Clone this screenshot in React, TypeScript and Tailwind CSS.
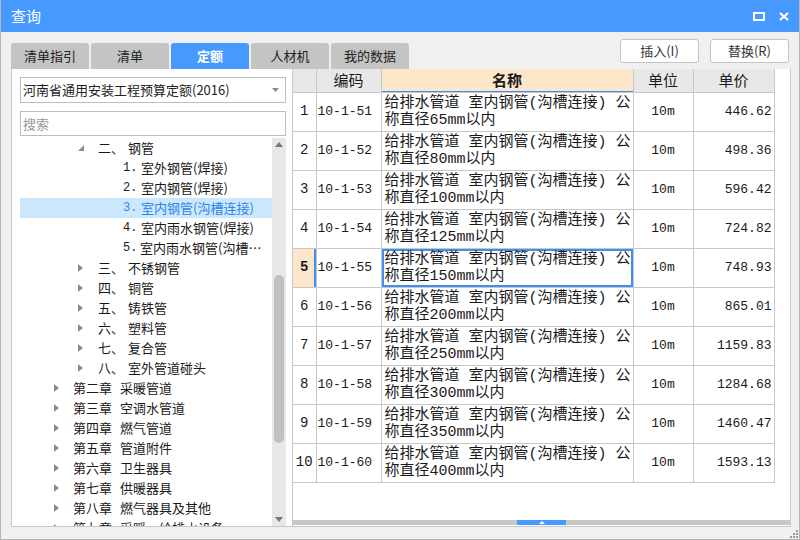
import React from 'react';

type TreeNode = {
  level: 'ch' | 'sec' | 'item';
  label: string;
  text: string;
  open?: boolean;
  selected?: boolean;
};

const tree: TreeNode[] = [
  { level: 'sec', label: '二、', text: '钢管', open: true },
  { level: 'item', label: '1.', text: '室外钢管(焊接)' },
  { level: 'item', label: '2.', text: '室内钢管(焊接)' },
  { level: 'item', label: '3.', text: '室内钢管(沟槽连接)', selected: true },
  { level: 'item', label: '4.', text: '室内雨水钢管(焊接)' },
  { level: 'item', label: '5.', text: '室内雨水钢管(沟槽连接)' },
  { level: 'sec', label: '三、', text: '不锈钢管' },
  { level: 'sec', label: '四、', text: '铜管' },
  { level: 'sec', label: '五、', text: '铸铁管' },
  { level: 'sec', label: '六、', text: '塑料管' },
  { level: 'sec', label: '七、', text: '复合管' },
  { level: 'sec', label: '八、', text: '室外管道碰头' },
  { level: 'ch', label: '第二章', text: '采暖管道' },
  { level: 'ch', label: '第三章', text: '空调水管道' },
  { level: 'ch', label: '第四章', text: '燃气管道' },
  { level: 'ch', label: '第五章', text: '管道附件' },
  { level: 'ch', label: '第六章', text: '卫生器具' },
  { level: 'ch', label: '第七章', text: '供暖器具' },
  { level: 'ch', label: '第八章', text: '燃气器具及其他' },
  { level: 'ch', label: '第九章', text: '采暖、给排水设备' },
];

const rows = [
  { code: '10-1-51', dia: '65', price: '446.62' },
  { code: '10-1-52', dia: '80', price: '498.36' },
  { code: '10-1-53', dia: '100', price: '596.42' },
  { code: '10-1-54', dia: '125', price: '724.82' },
  { code: '10-1-55', dia: '150', price: '748.93' },
  { code: '10-1-56', dia: '200', price: '865.01' },
  { code: '10-1-57', dia: '250', price: '1159.83' },
  { code: '10-1-58', dia: '300', price: '1284.68' },
  { code: '10-1-59', dia: '350', price: '1460.47' },
  { code: '10-1-60', dia: '400', price: '1593.13' },
];

const tabs = ['清单指引', '清单', '定额', '人材机', '我的数据'];

function Arrow({ open }: { open?: boolean }) {
  return open ? (
    <svg width="6" height="6" viewBox="0 0 6 6">
      <path d="M6 0 L6 6 L0 6 Z" fill="#8c8c8c" />
    </svg>
  ) : (
    <svg width="5" height="8" viewBox="0 0 5 8">
      <path d="M0 0 L5 4 L0 8 Z" fill="#8c8c8c" />
    </svg>
  );
}

function TreeRow({ node }: { node: TreeNode }) {
  const base = `h-[20px] flex items-center whitespace-nowrap text-[13px] ${
    node.selected ? 'bg-[#cce8ff] text-[#2f86e6]' : 'text-[#1a1a1a]'
  }`;
  if (node.level === 'ch') {
    return (
      <div className={`${base} pl-[34px]`}>
        <span className="w-[19px] flex items-center">
          <Arrow />
        </span>
        <span>{node.label}</span>
        <span className="ml-[8px]">{node.text}</span>
      </div>
    );
  }
  if (node.level === 'sec') {
    return (
      <div className={`${base} pl-[58px]`}>
        <span className="w-[20px] flex items-center">
          <Arrow open={node.open} />
        </span>
        <span className="w-[30px]">{node.label}</span>
        <span>{node.text}</span>
      </div>
    );
  }
  return (
    <div className={`${base} pl-[103px]`}>
      <span className="w-[18px] text-[12px] font-['Liberation_Mono',monospace]">{node.label}</span>
      <span className="truncate">{node.text}</span>
    </div>
  );
}

export default function App() {
  return (
    <div className="w-[800px] h-[540px] overflow-hidden bg-[#f0f0f0] border-x border-b border-[#b4b4b4] flex flex-col font-['Noto_Sans_CJK_SC',sans-serif] text-[#222]">
      {/* title bar */}
      <div className="h-[32px] shrink-0 bg-[#4599ff] flex items-center justify-between pl-[10px] pr-[10px]">
        <span className="text-white text-[15px]">查询</span>
        <div className="flex items-center gap-[14px]">
          <svg width="12" height="9" viewBox="0 0 12 9">
            <rect x="1" y="1" width="10" height="7" fill="none" stroke="#fff" strokeWidth="2" />
          </svg>
          <svg width="10" height="9" viewBox="0 0 10 9">
            <path d="M1 1 L9 8 M9 1 L1 8" stroke="#fff" strokeWidth="2.2" />
          </svg>
        </div>
      </div>

      {/* tabs + buttons */}
      <div className="h-[37px] shrink-0 flex justify-between pl-[10px] pr-[10px]">
        <div className="flex gap-[2px] mt-[11px] h-[26px]">
          {tabs.map((t) => (
            <div
              key={t}
              className={`w-[78px] h-[26px] rounded-t-[3px] flex items-center justify-center text-[13px] ${
                t === '定额' ? 'bg-[#4599ff] text-white font-bold' : 'bg-[#c4c4c4] text-[#222]'
              }`}
            >
              {t}
            </div>
          ))}
        </div>
        <div className="flex gap-[11px] mt-[7px] h-[24px]">
          {['插入(I)', '替换(R)'].map((b) => (
            <div
              key={b}
              className="w-[79px] h-[24px] bg-white border border-[#c4c4c4] rounded-[3px] flex items-center justify-center text-[13px] text-[#333]"
            >
              {b}
            </div>
          ))}
        </div>
      </div>

      {/* content */}
      <div className="ml-[10px] w-[780px] h-[458px] shrink-0 bg-white border-x border-b border-[#c8c8c8] flex">
        {/* left side */}
        <div className="w-[281px] h-full pl-[8px] pr-[6px] pt-[8px] flex flex-col border-r border-[#c8c8c8]">
          <div className="h-[26px] border border-[#bdbdbd] flex items-center justify-between pl-[2px] pr-[6px] text-[13px] whitespace-nowrap">
            <span>河南省通用安装工程预算定额(2016)</span>
            <svg width="7" height="4" viewBox="0 0 7 4">
              <path d="M0 0 L7 0 L3.5 4 Z" fill="#8c8c8c" />
            </svg>
          </div>
          <div className="h-[25px] mt-[8px] border border-[#bdbdbd] flex items-center pl-[2px] text-[13px] text-[#9a9a9a]">
            搜索
          </div>
          <div className="mt-[2px] flex-1 flex overflow-hidden">
            <div className="flex-1 overflow-hidden">
              {tree.map((n, i) => (
                <TreeRow key={i} node={n} />
              ))}
            </div>
            <div className="w-[14px] bg-[#e8e8e8] flex flex-col items-center">
              <svg className="mt-[4px]" width="8" height="5" viewBox="0 0 8 5">
                <path d="M4 0 L8 5 L0 5 Z" fill="#777" />
              </svg>
              <div className="mt-[128px] w-[10px] h-[168px] rounded-full bg-[#c1c1c1]" />
              <div className="flex-1" />
              <svg className="mb-[4px]" width="8" height="5" viewBox="0 0 8 5">
                <path d="M0 0 L8 0 L4 5 Z" fill="#777" />
              </svg>
            </div>
          </div>
        </div>

        {/* right side */}
        <div className="flex-1 h-full flex flex-col">
          <div className="flex-1">
            <table className="table-fixed border-collapse text-[#1a1a1a]">
              <colgroup>
                <col className="w-[23px]" />
                <col className="w-[65px]" />
                <col className="w-[252px]" />
                <col className="w-[60px]" />
                <col className="w-[81px]" />
              </colgroup>
              <thead>
                <tr className="h-[23px] text-[15px]">
                  <th className="border border-t-0 border-l-0 border-[#c8c8c8] bg-[#e8e8e8] font-normal"></th>
                  <th className="border border-t-0 border-[#c8c8c8] bg-[#e8e8e8] font-normal">编码</th>
                  <th className="border border-t-0 border-[#c8c8c8] bg-[#fde6c9] font-bold shadow-[inset_0_-1px_0_#3f8ff0]">名称</th>
                  <th className="border border-t-0 border-[#c8c8c8] bg-[#e8e8e8] font-normal">单位</th>
                  <th className="border border-t-0 border-[#c8c8c8] bg-[#e8e8e8] font-normal">单价</th>
                </tr>
              </thead>
              <tbody>
                {rows.map((r, i) => {
                  const sel = i === 4;
                  return (
                    <tr key={r.code} className="h-[39px]">
                      <td
                        className={`border border-l-0 border-[#c8c8c8] text-center text-[14px] font-['Liberation_Mono',monospace] ${
                          sel ? 'bg-[#fde6c9] font-bold shadow-[inset_-2px_0_0_#3f8ff0]' : ''
                        }`}
                      >
                        {i + 1}
                      </td>
                      <td className="border border-[#c8c8c8] pl-[1px] text-[13px] font-['Liberation_Mono',monospace] whitespace-nowrap">
                        {r.code}
                      </td>
                      <td
                        className={`border border-[#c8c8c8] pl-[3px] text-[15px] leading-[17px] font-['Liberation_Mono','Noto_Sans_CJK_SC',monospace] whitespace-nowrap overflow-hidden ${
                          sel ? 'shadow-[inset_0_0_0_2px_#3f8ff0]' : ''
                        }`}
                      >
                        <div>给排水管道 室内钢管(沟槽连接) 公</div>
                        <div>称直径{r.dia}mm以内</div>
                      </td>
                      <td className="border border-[#c8c8c8] text-center text-[13px] font-['Liberation_Mono',monospace]">
                        10m
                      </td>
                      <td className="border border-[#c8c8c8] text-right pr-[2px] text-[13px] font-['Liberation_Mono',monospace]">
                        {r.price}
                      </td>
                    </tr>
                  );
                })}
              </tbody>
            </table>
          </div>
          <div className="h-[5px] mb-[1px] bg-[#c8c8c8] flex justify-center">
            <div className="w-[49px] h-full bg-[#4599ff] flex items-center justify-center">
              <svg width="6" height="3" viewBox="0 0 6 3">
                <path d="M3 0 L6 3 L0 3 Z" fill="#fff" />
              </svg>
            </div>
          </div>
        </div>
      </div>

      {/* resize grip */}
      <div className="flex-1 flex justify-end items-end pr-[1px] pb-[1px]">
        <svg width="8" height="8" viewBox="0 0 8 8">
          <rect x="6" y="0" width="2" height="2" fill="#999" />
          <rect x="3" y="3" width="2" height="2" fill="#999" />
          <rect x="6" y="3" width="2" height="2" fill="#999" />
          <rect x="0" y="6" width="2" height="2" fill="#999" />
          <rect x="3" y="6" width="2" height="2" fill="#999" />
          <rect x="6" y="6" width="2" height="2" fill="#999" />
        </svg>
      </div>
    </div>
  );
}
